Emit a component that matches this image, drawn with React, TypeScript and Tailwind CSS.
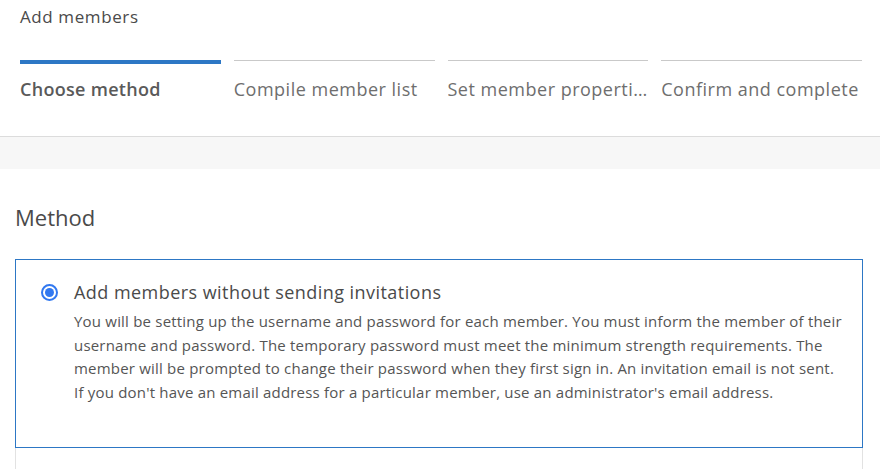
import React from "react";

const tabs = [
  { label: "Choose method", active: true },
  { label: "Compile member list", active: false },
  { label: "Set member properties", active: false },
  { label: "Confirm and complete", active: false },
];

export default function App() {
  return (
    <div className="w-[880px] h-[469px] overflow-hidden bg-white text-[#4a4a4a]" style={{ fontFamily: "'Open Sans', sans-serif" }}>
      <div className="pl-5 pr-[18px] pt-[5px] border-b border-[#dcdcdc]">
        <div className="text-[17px] leading-[24px] tracking-[0.6px] text-[#4a4a4a]">Add members</div>
        <div className="flex gap-[13px] mt-[31px]">
          {tabs.map((t) => (
            <div key={t.label} className="flex-1 min-w-0">
              {t.active ? (
                <div className="h-[4px] bg-[#2d77c5]" />
              ) : (
                <div className="h-[4px]"><div className="h-px bg-[#c9c9c9]" /></div>
              )}
              <div
                className={
                  "pt-[13px] pb-[35px] text-[18px] leading-[24px] truncate " +
                  (t.active ? "font-semibold tracking-[0.3px] text-[#5a5a5a]" : "tracking-[0.5px] text-[#6e6e6e]")
                }
              >
                {t.label}
              </div>
            </div>
          ))}
        </div>
      </div>
      <div className="h-[32px] bg-[#f7f7f7]" />
      <div className="pl-[15px] pr-[17px]">
        <div className="mt-[33px] text-[22px] leading-[30px] text-[#4a4a4a]">Method</div>
        <div className="mt-[27px] border border-[#2d77c5] pl-[25px] pr-4 pt-[20px] pb-[42px] flex gap-[16px]">
          <div className="pt-[4px]">
            <div className="w-[17px] h-[17px] rounded-full border-2 border-[#3178f0] flex items-center justify-center">
              <div className="w-[9px] h-[9px] rounded-full bg-[#3178f0]" />
            </div>
          </div>
          <div>
            <div className="text-[18px] leading-[24px] tracking-[0.45px] text-[#4a4a4a]">Add members without sending invitations</div>
            <p className="mt-[6px] text-[15px] leading-[23.7px] tracking-[0.2px] text-[#555] whitespace-nowrap">
              You will be setting up the username and password for each member. You must inform the member of their
              <br />
              username and password. The temporary password must meet the minimum strength requirements. The
              <br />
              member will be prompted to change their password when they first sign in. An invitation email is not sent.
              <br />
              If you don't have an email address for a particular member, use an administrator's email address.
            </p>
          </div>
        </div>
        <div className="h-[40px] border-x border-[#e2e2e2]" />
      </div>
    </div>
  );
}
